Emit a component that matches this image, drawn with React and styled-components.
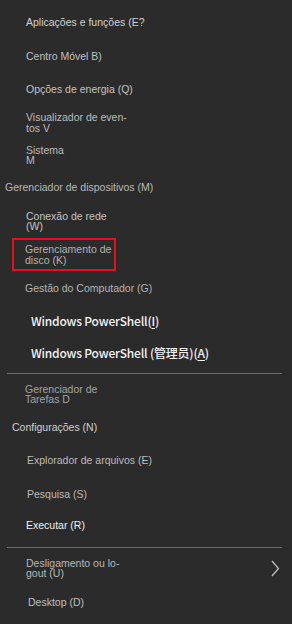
import React from 'react';
import styled, { createGlobalStyle } from 'styled-components';

const Global = createGlobalStyle`
  html, body { margin: 0; padding: 0; background: #2b2b2b; }
  body { width: 292px; height: 624px; overflow: hidden; }
`;

const Menu = styled.div`
  width: 292px;
  height: 624px;
  box-sizing: border-box;
  padding-top: 4px;
  background: #2b2b2b;
  display: flex;
  flex-direction: column;
  font-family: 'Liberation Sans', Arial, sans-serif;
`;

const Item = styled.div`
  position: relative;
  height: ${p => p.h}px;
  flex: none;
  display: flex;
  align-items: center;
  justify-content: space-between;
  box-sizing: border-box;
  padding-left: ${p => p.left}px;
  padding-right: 12px;
  color: ${p => p.color || '#c4c4c4'};
  font-size: 10.5px;
  line-height: 10.5px;
  white-space: pre-line;
`;

const Big = styled.span`
  font-family: 'Noto Sans CJK SC', 'Noto Sans', sans-serif;
  font-size: 12px;
  font-weight: 500;
  color: #f2f2f2;
  letter-spacing: -0.2px;
  u { text-underline-offset: 2px; }
`;

const Highlight = styled.div`
  position: absolute;
  left: 12px;
  top: 0;
  width: 104px;
  height: 100%;
  box-sizing: border-box;
  border: 2px solid #e0121c;
`;

const Separator = styled.div`
  flex: none;
  height: 1px;
  margin: ${p => p.mt}px 10px ${p => p.mb}px 7px;
  background: #6e6e6e;
`;

const Chevron = () => (
  <svg width="10" height="17" viewBox="0 0 10 17">
    <path d="M2 1 L8.5 8.5 L2 16" fill="none" stroke="#bdbdbd" strokeWidth="1.3" />
  </svg>
);

export default function App() {
  return (
    <>
      <Global />
      <Menu>
        <Item h={36} left={26} color="#d2d2d2">Aplicações e funções (E?</Item>
        <Item h={33} left={26} color="#c0c0c0">Centro Móvel B)</Item>
        <Item h={33} left={26} color="#c4c4c4">Opções de energia (Q)</Item>
        <Item h={33} left={26} color="#bcbcbc">{'Visualizador de even-\ntos V'}</Item>
        <Item h={32} left={26} color="#bcbcbc">{'Sistema\nM'}</Item>
        <Item h={33} left={5} color="#b8b8b8">Gerenciador de dispositivos (M)</Item>
        <Item h={34} left={26} color="#c4c4c4">{'Conexão de rede\n(W)'}</Item>
        <Item h={33} left={25} color="#b4b4b4">
          {'Gerenciamento de\ndisco (K)'}
          <Highlight />
        </Item>
        <Item h={34} left={25} color="#b4b4b4">Gestão do Computador (G)</Item>
        <Item h={32} left={31}><Big>Windows PowerShell(<u>I</u>)</Big></Item>
        <Item h={32} left={31}><Big>Windows PowerShell (管理员)(<u>A</u>)</Big></Item>
        <Separator mt={4} mb={2} />
        <Item h={36} left={25} color="#a4a4a4">{'Gerenciador de\nTarefas D'}</Item>
        <Item h={30} left={12} color="#d0d0d0">Configurações (N)</Item>
        <Item h={36} left={27} color="#bcbcbc">Explorador de arquivos (E)</Item>
        <Item h={32} left={27} color="#bcbcbc">Pesquisa (S)</Item>
        <Item h={31} left={26} color="#f0f0f0">Executar (R)</Item>
        <Separator mt={6} mb={4} />
        <Item h={32} left={26} color="#b8b8b8">
          <span>{'Desligamento ou lo-\ngout (U)'}</span>
          <Chevron />
        </Item>
        <Item h={36} left={28} color="#c0c0c0">Desktop (D)</Item>
      </Menu>
    </>
  );
}
